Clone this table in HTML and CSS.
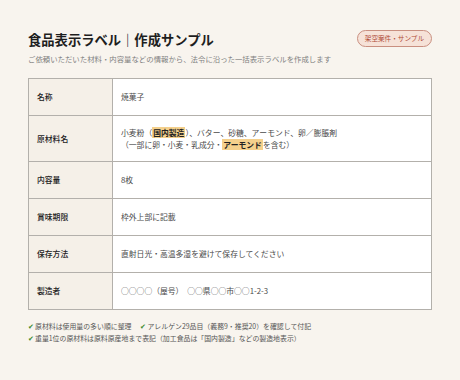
FILE: index.html
```html
<!DOCTYPE html>
<html lang="ja">
<head>
<meta charset="utf-8">
<link rel="stylesheet" href="styles.css">
</head>
<body>
<div class="page">
  <header class="head">
    <div class="titles">
      <h1 class="title">食品表示ラベル｜作成サンプル</h1>
      <p class="sub">ご依頼いただいた材料・内容量などの情報から、法令に沿った一括表示ラベルを作成します</p>
    </div>
    <span class="badge">架空案件・サンプル</span>
  </header>
  <table class="label">
    <tr class="r"><th>名称</th><td>焼菓子</td></tr>
    <tr class="r tall"><th>原材料名</th><td>小麦粉（<mark>国内製造</mark>）、バター、砂糖、アーモンド、卵／膨脹剤<br>（一部に卵・小麦・乳成分・<mark>アーモンド</mark>を含む）</td></tr>
    <tr class="r"><th>内容量</th><td>8枚</td></tr>
    <tr class="r"><th>賞味期限</th><td>枠外上部に記載</td></tr>
    <tr class="r"><th>保存方法</th><td>直射日光・高温多湿を避けて保存してください</td></tr>
    <tr class="r"><th>製造者</th><td>○○○○（屋号）　○○県○○市○○1-2-3</td></tr>
  </table>
  <ul class="notes">
    <li><span class="ck">✔</span>原材料は使用量の多い順に整理<span class="gap"></span><span class="ck">✔</span>アレルゲン29品目（義務9・推奨20）を確認して付記</li>
    <li><span class="ck">✔</span>重量1位の原材料は原料原産地まで表記（加工食品は「国内製造」などの製造地表示）</li>
  </ul>
</div>
</body>
</html>
```
FILE: styles.css
```css
html, body {
  margin: 0;
  padding: 0;
  background: #f8f4ee;
}
body {
  font-family: "Noto Sans CJK JP", "Noto Sans", sans-serif;
  color: #222;
}
.page {
  width: 404px;
  padding: 30px 28px 0 28px;
}
.head {
  display: flex;
  justify-content: space-between;
  align-items: flex-start;
}
.title {
  margin: 0;
  font-size: 13.3px;
  line-height: 20px;
  font-weight: 700;
  color: #1e1e1e;
}
.sub {
  margin: 3px 0 0 0;
  font-size: 7.4px;
  line-height: 12px;
  color: #808080;
}
.badge {
  margin-top: 0;
  border: 1px solid #c98f80;
  background: #f6e2d8;
  color: #b04a36;
  border-radius: 9px;
  font-size: 6.6px;
  line-height: 15px;
  padding: 0 7px;
}
.label {
  margin-top: 13px;
  width: 404px;
  border-collapse: collapse;
  border: 1px solid #a9a6a2;
}
.label th, .label td {
  border: 1px solid #b3b0ab;
  font-size: 7.8px;
  line-height: 12px;
  text-align: left;
  vertical-align: middle;
}
.label th {
  width: 67px;
  background: #f5f0e8;
  font-weight: 500;
  color: #222;
  padding: 0 8px;
}
.label td {
  background: #fff;
  color: #4a4a4a;
  padding: 0 8px;
}
.r { height: 37px; }
.r.tall { height: 46px; }
mark {
  background: #f4d08c;
  color: #222;
  font-weight: 700;
  padding: 0 1px;
}
.notes {
  list-style: none;
  margin: 10px 0 0 0;
  padding: 0;
  font-size: 6.9px;
  line-height: 12px;
  color: #555;
}
.ck {
  color: #3c8a2a;
  margin-right: 1px;
}
.gap {
  display: inline-block;
  width: 9px;
}
```
